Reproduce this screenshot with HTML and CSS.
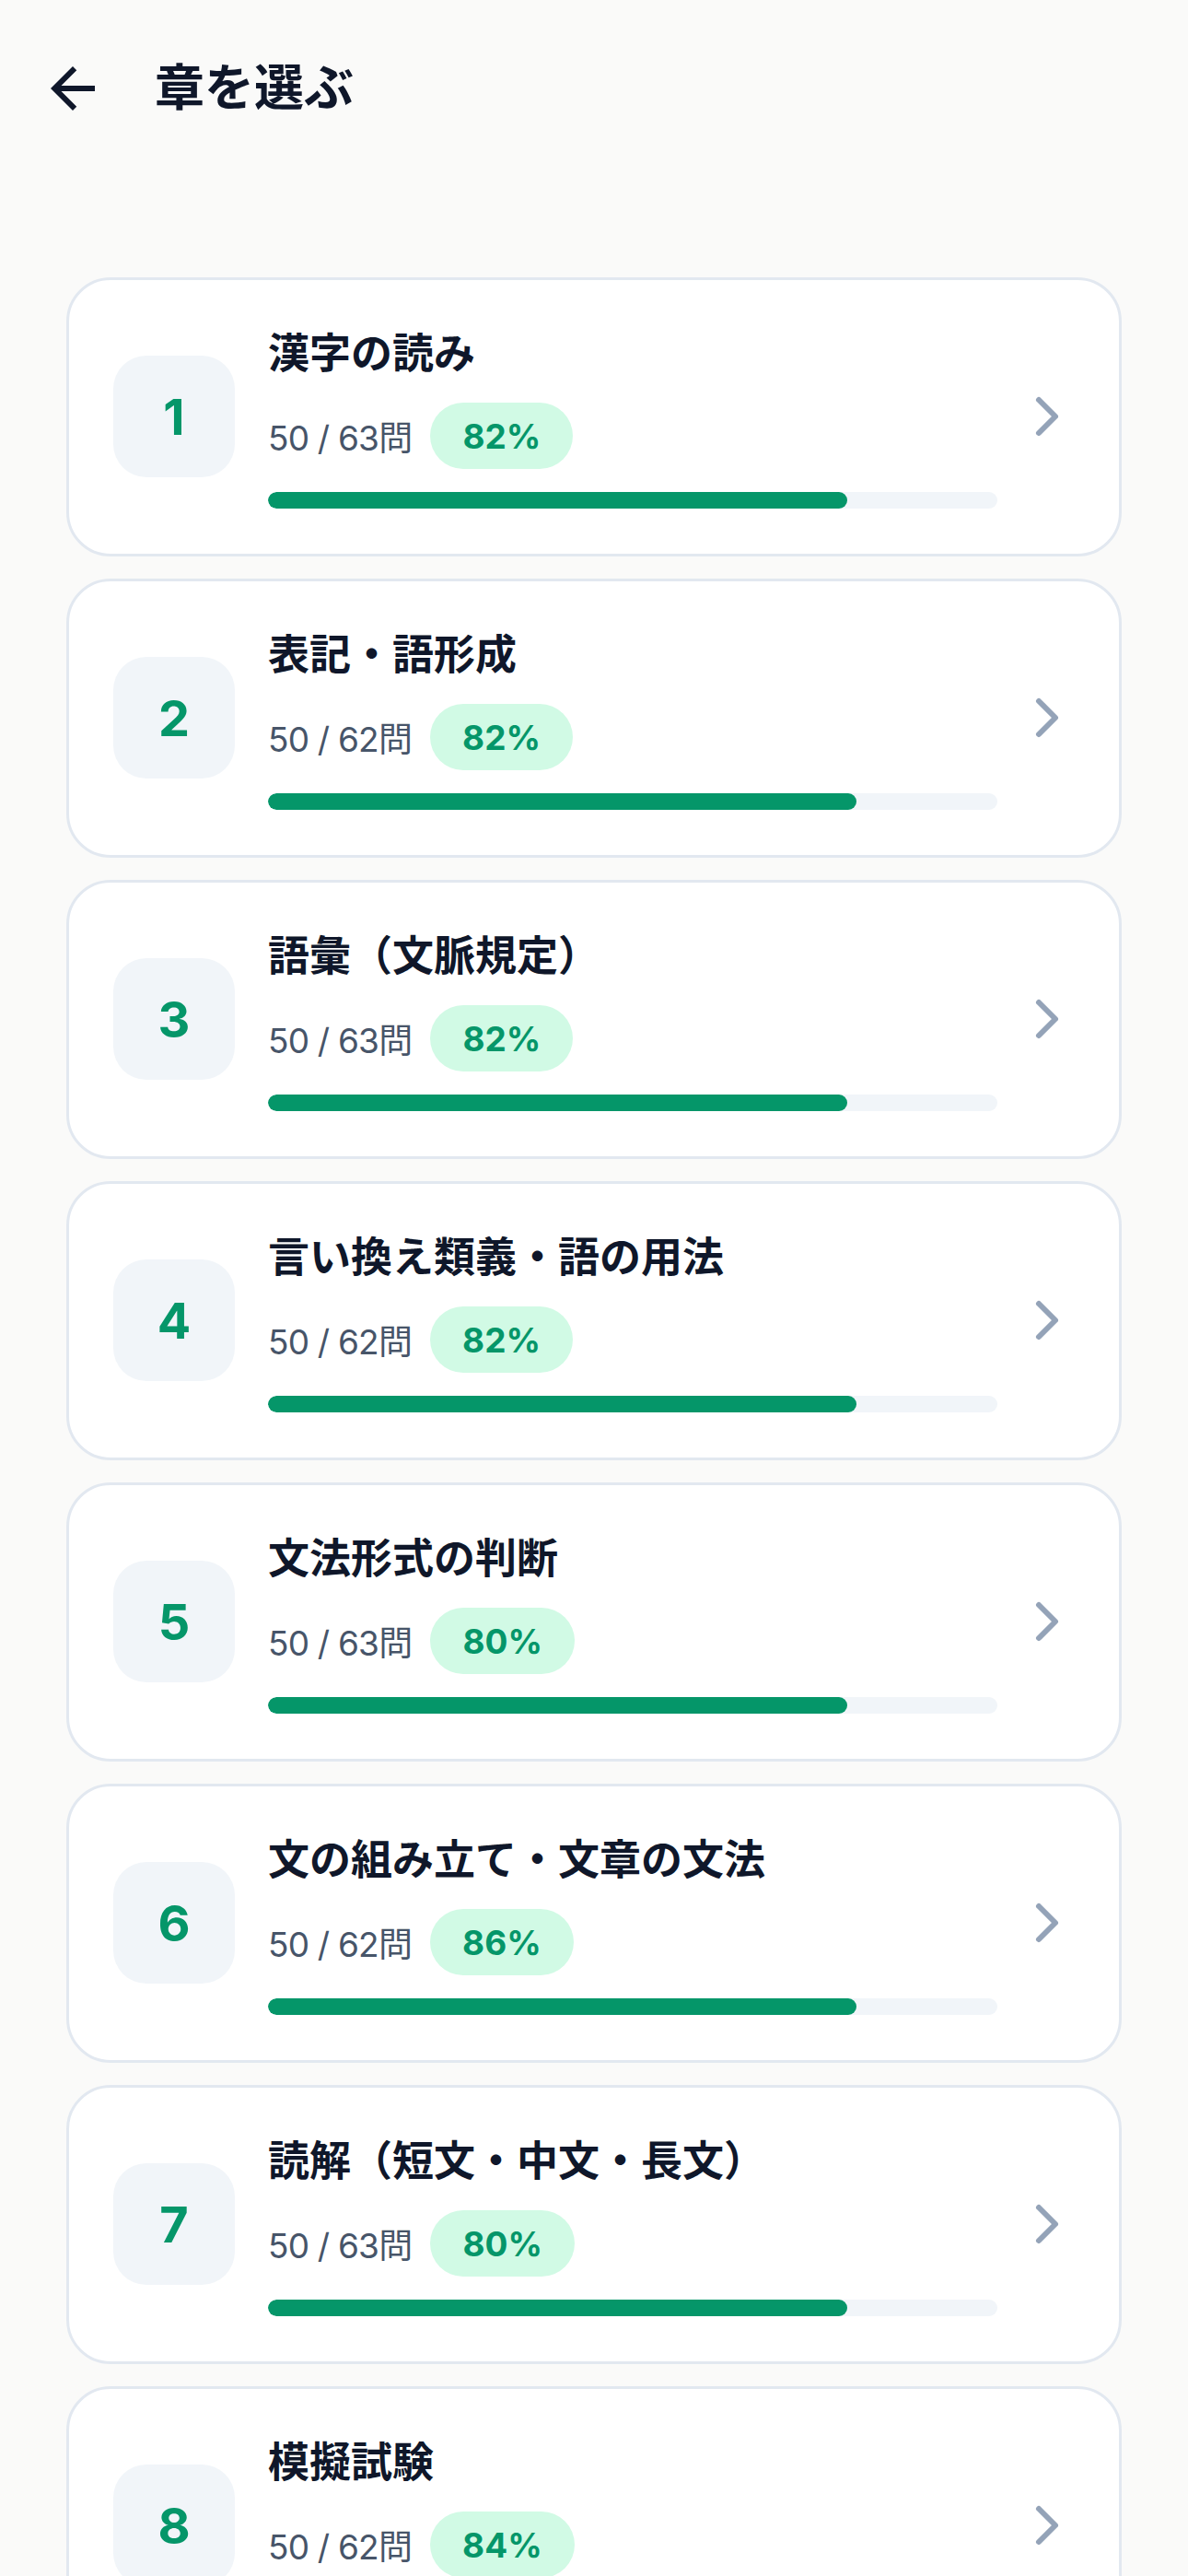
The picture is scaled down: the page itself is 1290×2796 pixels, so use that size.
FILE: index.html
```html
<!DOCTYPE html>
<html lang="ja">
<head>
<meta charset="utf-8">
<title>章を選ぶ</title>
<link rel="stylesheet" href="styles.css">
</head>
<body>
<div class="app">
  <header class="header">
    <button class="back" aria-label="戻る">
      <svg viewBox="0 0 24 24" class="back-icon"><path d="M20 11H7.83l5.59-5.59L12 4l-8 8 8 8 1.41-1.41L7.83 13H20v-2z"/></svg>
    </button>
    <h1 class="title">章を選ぶ</h1>
  </header>
  <main class="list">
    <a class="card"><div class="num">1</div><div class="body"><div class="name">漢字の読み</div><div class="meta"><span class="count">50 / 63問</span><span class="badge">82%</span></div><div class="track"><div class="fill" style="width:79.37%"></div></div></div><svg class="chev" viewBox="0 0 24 24"><path d="m9 18 6-6-6-6"/></svg></a>
    <a class="card"><div class="num">2</div><div class="body"><div class="name">表記・語形成</div><div class="meta"><span class="count">50 / 62問</span><span class="badge">82%</span></div><div class="track"><div class="fill" style="width:80.65%"></div></div></div><svg class="chev" viewBox="0 0 24 24"><path d="m9 18 6-6-6-6"/></svg></a>
    <a class="card"><div class="num">3</div><div class="body"><div class="name">語彙（文脈規定）</div><div class="meta"><span class="count">50 / 63問</span><span class="badge">82%</span></div><div class="track"><div class="fill" style="width:79.37%"></div></div></div><svg class="chev" viewBox="0 0 24 24"><path d="m9 18 6-6-6-6"/></svg></a>
    <a class="card"><div class="num">4</div><div class="body"><div class="name">言い換え類義・語の用法</div><div class="meta"><span class="count">50 / 62問</span><span class="badge">82%</span></div><div class="track"><div class="fill" style="width:80.65%"></div></div></div><svg class="chev" viewBox="0 0 24 24"><path d="m9 18 6-6-6-6"/></svg></a>
    <a class="card"><div class="num">5</div><div class="body"><div class="name">文法形式の判断</div><div class="meta"><span class="count">50 / 63問</span><span class="badge">80%</span></div><div class="track"><div class="fill" style="width:79.37%"></div></div></div><svg class="chev" viewBox="0 0 24 24"><path d="m9 18 6-6-6-6"/></svg></a>
    <a class="card"><div class="num">6</div><div class="body"><div class="name">文の組み立て・文章の文法</div><div class="meta"><span class="count">50 / 62問</span><span class="badge">86%</span></div><div class="track"><div class="fill" style="width:80.65%"></div></div></div><svg class="chev" viewBox="0 0 24 24"><path d="m9 18 6-6-6-6"/></svg></a>
    <a class="card"><div class="num">7</div><div class="body"><div class="name">読解（短文・中文・長文）</div><div class="meta"><span class="count">50 / 63問</span><span class="badge">80%</span></div><div class="track"><div class="fill" style="width:79.37%"></div></div></div><svg class="chev" viewBox="0 0 24 24"><path d="m9 18 6-6-6-6"/></svg></a>
    <a class="card"><div class="num">8</div><div class="body"><div class="name">模擬試験</div><div class="meta"><span class="count">50 / 62問</span><span class="badge">84%</span></div><div class="track"><div class="fill" style="width:80.65%"></div></div></div><svg class="chev" viewBox="0 0 24 24"><path d="m9 18 6-6-6-6"/></svg></a>
  </main>
</div>
</body>
</html>
```
FILE: styles.css
```css
* { box-sizing: border-box; }
html, body { margin: 0; padding: 0; }
body {
  background: #fafaf9;
  font-family: "Inter", "Noto Sans CJK JP", sans-serif;
  color: #0f172a;
}
.app {
  height: 100vh;
  display: flex;
  flex-direction: column;
  overflow: hidden;
}
.header {
  flex: none;
  height: 192px;
  display: flex;
  align-items: center;
  padding-left: 43px;
}
.back {
  width: 72px;
  height: 72px;
  padding: 0;
  border: 0;
  background: none;
  display: flex;
}
.back-icon { width: 72px; height: 72px; fill: #0f172a; }
.title {
  margin: 0 0 0 53px;
  font-size: 54px;
  font-weight: 700;
  line-height: 1.3;
  color: #0f172a;
}
.list {
  flex: 1;
  overflow: hidden;
  padding: 109px 72px 0;
  display: flex;
  flex-direction: column;
  gap: 24px;
}
.card {
  flex: none;
  display: flex;
  align-items: center;
  background: #ffffff;
  border: 3px solid #e2e8f0;
  border-radius: 48px;
  padding: 48px 42px 49px 48px;
}
.num {
  flex: none;
  width: 132px;
  height: 132px;
  border-radius: 36px;
  background: #f1f5f9;
  color: #059669;
  font-size: 54px;
  font-weight: 700;
  display: flex;
  align-items: center;
  justify-content: center;
}
.body {
  flex: 1;
  margin-left: 36px;
  display: flex;
  flex-direction: column;
}
.name {
  font-size: 45px;
  font-weight: 700;
  line-height: 63px;
  color: #0f172a;
}
.meta {
  margin-top: 22px;
  display: flex;
  align-items: center;
  gap: 20px;
}
.count {
  font-size: 37px;
  letter-spacing: -0.8px;
  color: #475569;
}
.badge {
  height: 72px;
  padding: 0 35px;
  border-radius: 999px;
  background: #d1fae5;
  color: #059669;
  font-size: 37px;
  font-weight: 700;
  display: flex;
  align-items: center;
}
.track {
  margin-top: 25px;
  height: 18px;
  border-radius: 999px;
  background: #f1f5f9;
  overflow: hidden;
}
.fill {
  height: 100%;
  border-radius: 999px;
  background: #059669;
}
.chev {
  flex: none;
  width: 72px;
  height: 72px;
  margin-left: 18px;
  fill: none;
  stroke: #94a3b8;
  stroke-width: 2;
  stroke-linecap: round;
  stroke-linejoin: round;
}
```
